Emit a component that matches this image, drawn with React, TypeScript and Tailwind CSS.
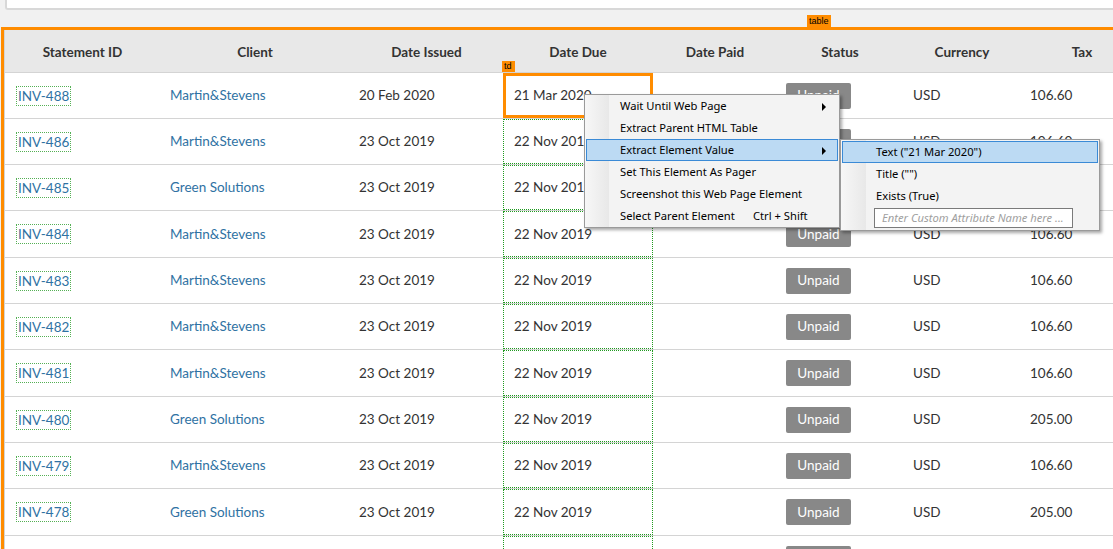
import React from "react";

type Row = { id: string; client: string; issued: string; due: string; tax: string; h: string };

const rows: Row[] = [
  { id: "INV-488", client: "Martin&Stevens", issued: "20 Feb 2020", due: "21 Mar 2020", tax: "106.60", h: "h-[46px]" },
  { id: "INV-486", client: "Martin&Stevens", issued: "23 Oct 2019", due: "22 Nov 2019", tax: "106.60", h: "h-[46px]" },
  { id: "INV-485", client: "Green Solutions", issued: "23 Oct 2019", due: "22 Nov 2019", tax: "205.00", h: "h-[46px]" },
  { id: "INV-484", client: "Martin&Stevens", issued: "23 Oct 2019", due: "22 Nov 2019", tax: "106.60", h: "h-[47px]" },
  { id: "INV-483", client: "Martin&Stevens", issued: "23 Oct 2019", due: "22 Nov 2019", tax: "106.60", h: "h-[46px]" },
  { id: "INV-482", client: "Martin&Stevens", issued: "23 Oct 2019", due: "22 Nov 2019", tax: "106.60", h: "h-[46px]" },
  { id: "INV-481", client: "Martin&Stevens", issued: "23 Oct 2019", due: "22 Nov 2019", tax: "106.60", h: "h-[47px]" },
  { id: "INV-480", client: "Green Solutions", issued: "23 Oct 2019", due: "22 Nov 2019", tax: "205.00", h: "h-[46px]" },
  { id: "INV-479", client: "Martin&Stevens", issued: "23 Oct 2019", due: "22 Nov 2019", tax: "106.60", h: "h-[46px]" },
  { id: "INV-478", client: "Green Solutions", issued: "23 Oct 2019", due: "22 Nov 2019", tax: "205.00", h: "h-[47px]" },
  { id: "INV-477", client: "Martin&Stevens", issued: "23 Oct 2019", due: "22 Nov 2019", tax: "106.60", h: "h-[46px]" },
];

const headers: { label: string; w: string }[] = [
  { label: "Statement ID", w: "w-[155px]" },
  { label: "Client", w: "w-[190px]" },
  { label: "Date Issued", w: "w-[153px]" },
  { label: "Date Due", w: "w-[150px]" },
  { label: "Date Paid", w: "w-[124px]" },
  { label: "Status", w: "w-[126px]" },
  { label: "Currency", w: "w-[118px]" },
  { label: "Tax", w: "w-[122px]" },
];

function Arrow() {
  return (
    <svg width="5" height="8" viewBox="0 0 5 8" className="absolute right-[10px] top-[7px]">
      <path d="M0 0 L4 4 L0 8 Z" fill="#000" />
    </svg>
  );
}

function MenuItem({ label, hl, arrow, shortcut }: { label: string; hl?: boolean; arrow?: boolean; shortcut?: string }) {
  return (
    <div
      className={
        hl
          ? "relative h-[22px] mx-[1px] flex items-center pl-[33px] bg-[#bcdaf3] border border-[#3a8ad6]"
          : "relative h-[22px] mx-[1px] flex items-center pl-[33px] border border-transparent"
      }
    >
      <span>{label}</span>
      {shortcut && <span className="absolute left-[166px]">{shortcut}</span>}
      {arrow && <Arrow />}
    </div>
  );
}

export default function App() {
  return (
    <div className="relative w-[1113px] h-[549px] overflow-hidden bg-[#f1f1f1] font-['Lato',sans-serif] text-[13.5px] text-[#333]">
      {/* top input box */}
      <div className="ml-[5px] h-[10px] bg-white border-l-2 border-b-2 border-[#d8d8d8] rounded-bl-[3px]" />
      <div className="h-[17px]" />

      {/* table with orange highlight */}
      <div className="relative ml-[1px] border-l-[3px] border-t-[3px] border-[#ff8c00]">
        <div className="absolute -top-[15px] left-[803px] h-[12px] px-[2px] bg-[#ff8c00] text-black text-[9px] leading-[12px] font-['Liberation_Sans',sans-serif]">
          table
        </div>
        <div className="border-l border-[#d4d4d4] bg-white">
          {/* header */}
          <div className="flex h-[43px] bg-[#e8e8e8] border-b border-[#d4d4d4] font-bold text-[#333]">
            {headers.map((h) => (
              <div key={h.label} className={`${h.w} shrink-0 flex items-center justify-center pt-[2px]`}>
                {h.label}
              </div>
            ))}
          </div>
          {rows.map((r, i) => (
            <div key={r.id} className={`${r.h} flex border-b border-[#d4d4d4]`}>
              <div className="w-[155px] shrink-0 flex items-center pl-[11px]">
                <span className="border border-dotted border-[#55b055] px-[1px] leading-[18px] text-[#2f72a3]">{r.id}</span>
              </div>
              <div className="w-[190px] shrink-0 flex items-center pl-[10px] text-[#2f72a3]">{r.client}</div>
              <div className="w-[153px] shrink-0 flex items-center pl-[9px]">{r.issued}</div>
              <div className="relative w-[150px] shrink-0 flex items-center pl-[10px] border border-dotted border-[#1f9a1f]">
                {r.due}
                {i === 0 && (
                  <>
                    <div className="absolute -inset-[1px] border-[3px] border-[#ff8c00]" />
                    <div className="absolute -top-[13px] -left-[2px] h-[11px] w-[13px] bg-[#ff8c00] text-black text-[9px] leading-[11px] pl-[2px] font-['Liberation_Sans',sans-serif]">
                      td
                    </div>
                  </>
                )}
              </div>
              <div className="w-[124px] shrink-0" />
              <div className="w-[126px] shrink-0 flex items-center pl-[9px]">
                <span className="w-[65px] h-[26px] rounded-[2px] bg-[#888888] text-white flex items-center justify-center">
                  Unpaid
                </span>
              </div>
              <div className="w-[118px] shrink-0 flex items-center pl-[10px]">USD</div>
              <div className="w-[122px] shrink-0 flex items-center pl-[9px]">{r.tax}</div>
            </div>
          ))}
        </div>
      </div>

      {/* context menu */}
      <div className="absolute left-[584px] top-[94px] w-[256px] bg-[#f3f3f3] border border-[#9a9a9a] shadow-[2px_2px_3px_rgba(0,0,0,0.35)] font-['Noto_Sans',sans-serif] text-[11.2px] text-black">
        <div className="absolute left-0 top-0 bottom-0 w-[24px] bg-linear-to-r from-[#f7f7f7] to-[#e8e8e8]" />
        <MenuItem label="Wait Until Web Page" arrow />
        <MenuItem label="Extract Parent HTML Table" />
        <MenuItem label="Extract Element Value" arrow hl />
        <MenuItem label="Set This Element As Pager" />
        <MenuItem label="Screenshot this Web Page Element" />
        <MenuItem label="Select Parent Element" shortcut="Ctrl + Shift" />
      </div>

      {/* submenu */}
      <div className="absolute left-[840px] top-[139px] w-[260px] pt-[1px] pb-[2px] bg-[#f3f3f3] border border-[#9a9a9a] shadow-[2px_2px_3px_rgba(0,0,0,0.35)] font-['Noto_Sans',sans-serif] text-[11.2px] text-black">
        <div className="absolute left-0 top-0 bottom-0 w-[25px] bg-linear-to-r from-[#f7f7f7] to-[#e8e8e8]" />
        <MenuItem label={'Text ("21 Mar 2020")'} hl />
        <MenuItem label={'Title ("")'} />
        <MenuItem label="Exists (True)" />
        <div className="relative ml-[33px] mt-[1px] w-[199px] h-[20px] bg-white border border-[#7a7a7a] flex items-center pl-[7px] italic text-[11.2px] text-[#a0a0a0]">
          Enter Custom Attribute Name here ...
        </div>
      </div>
    </div>
  );
}
